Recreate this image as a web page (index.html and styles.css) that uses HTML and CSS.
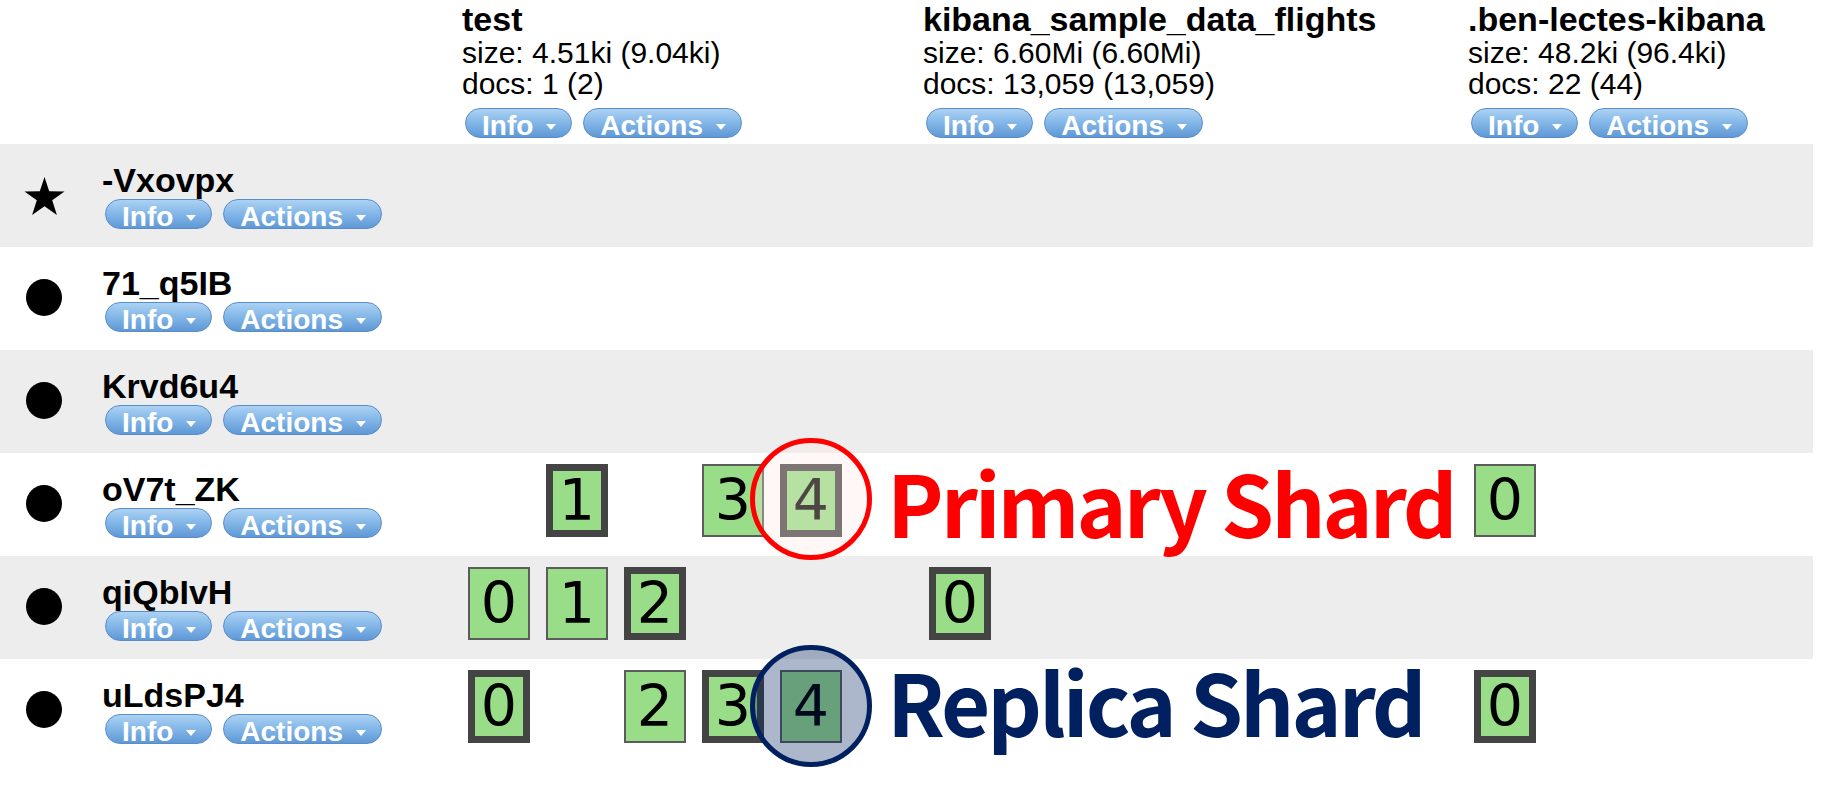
FILE: index.html
```html
<!DOCTYPE html>
<html lang="en">
<head>
<meta charset="utf-8">
<title>Cluster overview</title>
<link rel="stylesheet" href="styles.css">
</head>
<body>
<div class="page">
  <div class="overview">
    <div class="row head">
      <div class="node-cell"></div>
      <div class="index-cell">
        <div class="index-name">test</div>
        <div class="index-stat">size: 4.51ki (9.04ki)</div>
        <div class="index-stat">docs: 1 (2)</div>
        <div class="btns"><span class="btn"><span class="btn-label">Info</span><span class="caret"></span></span><span class="btn"><span class="btn-label">Actions</span><span class="caret"></span></span></div>
      </div>
      <div class="index-cell">
        <div class="index-name">kibana_sample_data_flights</div>
        <div class="index-stat">size: 6.60Mi (6.60Mi)</div>
        <div class="index-stat">docs: 13,059 (13,059)</div>
        <div class="btns"><span class="btn"><span class="btn-label">Info</span><span class="caret"></span></span><span class="btn"><span class="btn-label">Actions</span><span class="caret"></span></span></div>
      </div>
      <div class="index-cell">
        <div class="index-name">.ben-lectes-kibana</div>
        <div class="index-stat">size: 48.2ki (96.4ki)</div>
        <div class="index-stat">docs: 22 (44)</div>
        <div class="btns"><span class="btn"><span class="btn-label">Info</span><span class="caret"></span></span><span class="btn"><span class="btn-label">Actions</span><span class="caret"></span></span></div>
      </div>
    </div>

    <div class="row node alt">
      <div class="node-cell">
        <div class="node-icon"><svg class="star" viewBox="0 0 40 38" width="41" height="38"><polygon points="20,0 24.7,14.2 40,14.4 27.7,23.3 32.4,38 20,29.2 7.6,38 12.3,23.3 0,14.4 15.3,14.2" fill="#000"/></svg></div>
        <div class="node-info">
          <div class="node-name">-Vxovpx</div>
          <div class="btns"><span class="btn"><span class="btn-label">Info</span><span class="caret"></span></span><span class="btn"><span class="btn-label">Actions</span><span class="caret"></span></span></div>
        </div>
      </div>
      <div class="shard-cell"></div><div class="shard-cell"></div><div class="shard-cell"></div>
    </div>

    <div class="row node">
      <div class="node-cell">
        <div class="node-icon"><span class="dot"></span></div>
        <div class="node-info">
          <div class="node-name">71_q5IB</div>
          <div class="btns"><span class="btn"><span class="btn-label">Info</span><span class="caret"></span></span><span class="btn"><span class="btn-label">Actions</span><span class="caret"></span></span></div>
        </div>
      </div>
      <div class="shard-cell"></div><div class="shard-cell"></div><div class="shard-cell"></div>
    </div>

    <div class="row node alt">
      <div class="node-cell">
        <div class="node-icon"><span class="dot"></span></div>
        <div class="node-info">
          <div class="node-name">Krvd6u4</div>
          <div class="btns"><span class="btn"><span class="btn-label">Info</span><span class="caret"></span></span><span class="btn"><span class="btn-label">Actions</span><span class="caret"></span></span></div>
        </div>
      </div>
      <div class="shard-cell"></div><div class="shard-cell"></div><div class="shard-cell"></div>
    </div>

    <div class="row node">
      <div class="node-cell">
        <div class="node-icon"><span class="dot"></span></div>
        <div class="node-info">
          <div class="node-name">oV7t_ZK</div>
          <div class="btns"><span class="btn"><span class="btn-label">Info</span><span class="caret"></span></span><span class="btn"><span class="btn-label">Actions</span><span class="caret"></span></span></div>
        </div>
      </div>
      <div class="shard-cell">
        <div class="shards"><span class="shard primary s1">1</span><span class="shard s3">3</span><span class="shard primary s4">4</span></div>
      </div>
      <div class="shard-cell"></div>
      <div class="shard-cell">
        <div class="shards"><span class="shard s0">0</span></div>
      </div>
    </div>

    <div class="row node alt">
      <div class="node-cell">
        <div class="node-icon"><span class="dot"></span></div>
        <div class="node-info">
          <div class="node-name">qiQbIvH</div>
          <div class="btns"><span class="btn"><span class="btn-label">Info</span><span class="caret"></span></span><span class="btn"><span class="btn-label">Actions</span><span class="caret"></span></span></div>
        </div>
      </div>
      <div class="shard-cell">
        <div class="shards"><span class="shard s0">0</span><span class="shard s1">1</span><span class="shard primary s2">2</span></div>
      </div>
      <div class="shard-cell">
        <div class="shards"><span class="shard primary s0">0</span></div>
      </div>
      <div class="shard-cell"></div>
    </div>

    <div class="row node">
      <div class="node-cell">
        <div class="node-icon"><span class="dot"></span></div>
        <div class="node-info">
          <div class="node-name">uLdsPJ4</div>
          <div class="btns"><span class="btn"><span class="btn-label">Info</span><span class="caret"></span></span><span class="btn"><span class="btn-label">Actions</span><span class="caret"></span></span></div>
        </div>
      </div>
      <div class="shard-cell">
        <div class="shards"><span class="shard primary s0">0</span><span class="shard s2">2</span><span class="shard primary s3">3</span><span class="shard s4">4</span></div>
      </div>
      <div class="shard-cell"></div>
      <div class="shard-cell">
        <div class="shards"><span class="shard primary s0">0</span></div>
      </div>
    </div>
  </div>

  <div class="mark mark-primary"></div>
  <div class="mark mark-replica"></div>
  <div class="note note-primary">Primary Shard</div>
  <div class="note note-replica">Replica Shard</div>
</div>
</body>
</html>
```

FILE: styles.css
```css
html, body {
  margin: 0;
  padding: 0;
  background: #fff;
}

body {
  font-family: "Liberation Sans", Arial, sans-serif;
  color: #000;
}

.page {
  position: relative;
  width: 1848px;
  height: 804px;
  overflow: hidden;
}

.overview {
  width: 1813px;
  display: flex;
  flex-direction: column;
}

.row {
  display: grid;
  grid-template-columns: 462px 461px 545px 345px;
}

.row.head {
  height: 144px;
}

.row.node {
  height: 103px;
}

.row.alt {
  background: #ededed;
}

/* header cells */
.index-cell {
  padding-top: 1px;
}

.index-name {
  font-weight: bold;
  font-size: 34px;
  line-height: 36px;
  white-space: nowrap;
}

.index-stat {
  font-size: 30px;
  line-height: 31px;
  white-space: nowrap;
}

.index-cell .btns {
  margin-top: 9px;
  padding-left: 3px;
}

/* node cells */
.node-cell {
  display: flex;
}

.node-icon {
  width: 88px;
  display: flex;
  align-items: center;
  justify-content: center;
}

.star {
  display: block;
  margin-top: 1px;
}

.dot {
  display: block;
  width: 36px;
  height: 37px;
  border-radius: 50%;
  background: #000;
  margin-top: -2px;
}

.node-info {
  padding-top: 19px;
  padding-left: 14px;
}

.node-name {
  font-weight: bold;
  font-size: 34px;
  line-height: 34px;
  margin-bottom: 2px;
  white-space: nowrap;
}

.node-info .btns {
  padding-left: 3px;
}

/* buttons */
.btns {
  display: flex;
  gap: 11px;
}

.btn {
  display: flex;
  align-items: flex-start;
  box-sizing: border-box;
  height: 30px;
  padding: 0 15px 0 16px;
  border: 1px solid #5a8ccb;
  border-radius: 15px;
  background: linear-gradient(to bottom, #acd2f3 0%, #86b9e9 45%, #5f98d5 100%);
  color: #fff;
  font-weight: bold;
  font-size: 28px;
}

.btn-label {
  height: 28px;
  line-height: 33px;
  white-space: nowrap;
}

.caret {
  width: 0;
  height: 0;
  margin: 15px 0 0 13px;
  border-top: 6px solid #fff;
  border-left: 5px solid transparent;
  border-right: 5px solid transparent;
}

/* shards */
.shard-cell {
  padding-top: 11px;
}

.shards {
  display: grid;
  grid-template-columns: repeat(5, 62px);
  column-gap: 16px;
  padding-left: 6px;
}

.shard {
  box-sizing: border-box;
  width: 62px;
  height: 73px;
  display: flex;
  align-items: center;
  justify-content: center;
  background: #99dd88;
  border: 2px solid #5c5c5c;
  font-family: "DejaVu Sans", Verdana, sans-serif;
  font-size: 57px;
  line-height: 1;
  color: #000;
  grid-row: 1;
}

.shard.primary {
  border: 7px solid #444;
}

.s0 { grid-column: 1; }
.s1 { grid-column: 2; }
.s2 { grid-column: 3; }
.s3 { grid-column: 4; }
.s4 { grid-column: 5; }

/* annotations */
.mark {
  position: absolute;
  box-sizing: border-box;
  width: 122px;
  height: 122px;
  border-radius: 50%;
}

.mark-primary {
  left: 750px;
  top: 438px;
  border: 5px solid #ff0000;
  background: rgba(255, 232, 226, 0.3);
}

.mark-replica {
  left: 750px;
  top: 645px;
  border: 5px solid #002060;
  background: rgba(0, 32, 96, 0.32);
}

.note {
  position: absolute;
  left: 887px;
  font-family: "Noto Sans CJK KR", "Noto Sans", sans-serif;
  font-weight: bold;
  font-size: 85px;
  line-height: 100px;
  letter-spacing: -3px;
  white-space: nowrap;
}

.note-primary {
  top: 451px;
  color: #ff0000;
}

.note-replica {
  top: 650px;
  color: #002060;
}
```
